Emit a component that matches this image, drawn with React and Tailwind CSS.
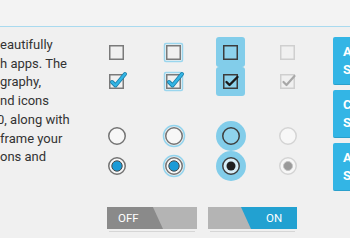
import React from 'react';

const BLUE = '#33b5e5';
const HALO = '#82cdea';

function Checkbox({ variant = 'normal', checked = false }) {
  const disabled = variant === 'disabled';
  const pressed = variant === 'pressed';
  const boxStroke = disabled ? '#cfcfcf' : pressed ? '#3c3c3c' : '#7a7a7a';
  return (
    <svg width="24" height="24" viewBox="0 0 24 24">
      {variant === 'focused' && (
        <rect x="2.5" y="3.5" width="18" height="18" rx="1.5" fill="none" stroke="#9ad6ee" strokeWidth="1.5" />
      )}
      <rect
        x="4.75"
        y="5.75"
        width="13.5"
        height="13.5"
        fill={pressed ? '#8dd2ec' : 'none'}
        stroke={boxStroke}
        strokeWidth="1.5"
      />
      {checked && !pressed && !disabled && (
        <>
          <path d="M7 13 L10.5 16.5 L20 5" fill="none" stroke="#1b7fa8" strokeWidth="4" strokeLinecap="round" strokeLinejoin="round" />
          <path d="M7 13 L10.5 16.5 L20 5" fill="none" stroke={BLUE} strokeWidth="2.4" strokeLinecap="round" strokeLinejoin="round" />
        </>
      )}
      {checked && pressed && (
        <path d="M7.5 13 L10.5 16 L18.5 8" fill="none" stroke="#1a1a1a" strokeWidth="2.4" strokeLinecap="round" strokeLinejoin="round" />
      )}
      {checked && disabled && (
        <path d="M7.5 13 L10.5 16 L18.5 7" fill="none" stroke="#a8a8a8" strokeWidth="2.2" strokeLinecap="round" strokeLinejoin="round" />
      )}
    </svg>
  );
}

function Radio({ variant = 'normal', checked = false }) {
  const disabled = variant === 'disabled';
  const pressed = variant === 'pressed';
  return (
    <svg width="30" height="30" viewBox="0 0 30 30">
      {pressed && <circle cx="15" cy="15" r="15" fill={HALO} />}
      {variant === 'focused' && <circle cx="15" cy="15" r="10.5" fill="none" stroke="#92d4ee" strokeWidth="1.5" />}
      <circle
        cx="15"
        cy="15"
        r="8.25"
        fill={pressed ? (checked ? '#d6eef8' : '#8fd3ed') : '#f7f7f7'}
        stroke={disabled ? '#d4d4d4' : pressed ? '#3f3f3f' : '#747474'}
        strokeWidth="1.5"
      />
      {checked && !pressed && !disabled && (
        <circle cx="15" cy="15" r="5.2" fill="#1b9bd7" stroke="#4a4a4a" strokeWidth="1" />
      )}
      {checked && pressed && <circle cx="15" cy="15" r="4.5" fill="#1f1f1f" />}
      {checked && disabled && <circle cx="15" cy="15" r="4.5" fill="#9a9a9a" stroke="#c4c4c4" strokeWidth="1" />}
    </svg>
  );
}

const variants = ['normal', 'focused', 'pressed', 'disabled'];

export default function App() {
  const lines = [
    ['eautifully', ''],
    ['h apps. The', ''],
    ['graphy,', ''],
    ['nd icons', ''],
    ['0, along with', '-ml-[3px]'],
    ['frame your', ''],
    ['ons and', ''],
  ];

  return (
    <div className="w-[350px] h-[238px] overflow-hidden bg-[#f0f0f0] flex flex-col" style={{ fontFamily: 'Roboto, "Liberation Sans", sans-serif' }}>
      <div className="h-[27px] shrink-0 bg-[#f3f3f3] border-b border-[#a9daef]" />
      <div className="flex">
        <div className="w-[88px] shrink-0 pt-[9px] text-[13px] leading-[18.7px] text-[#333] whitespace-nowrap overflow-hidden">
          {lines.map(([t, cls]) => (
            <div key={t} className={cls}>{t}</div>
          ))}
        </div>

        <div className="w-[228px] shrink-0 pt-[10px]">
          <div className="grid grid-cols-4">
            {[false, true].map((checked) =>
              variants.map((v) => (
                <div key={v + checked} className="h-[29.5px] flex items-center justify-center">
                  {v === 'pressed' ? (
                    <div className="w-[29px] h-[29.5px] rounded-[3px] bg-[#82cdea] flex items-center justify-center">
                      <Checkbox variant={v} checked={checked} />
                    </div>
                  ) : (
                    <Checkbox variant={v} checked={checked} />
                  )}
                </div>
              ))
            )}
          </div>

          <div className="grid grid-cols-4 mt-[25px]">
            {[false, true].map((checked) =>
              variants.map((v) => (
                <div key={v + checked} className="h-[30px] flex items-center justify-center">
                  <Radio variant={v} checked={checked} />
                </div>
              ))
            )}
          </div>

          <div className="flex gap-[11px] pl-[19px] mt-[26px]">
            <div>
              <div className="relative w-[90px] h-[22px] bg-[#b4b4b4]">
                <div className="absolute inset-y-0 left-0 w-[56px] bg-[#8a8a8a] [clip-path:polygon(0_0,82%_0,100%_100%,0_100%)]" />
                <span className="absolute left-[11px] top-0 leading-[22px] text-[11.5px] text-white">OFF</span>
              </div>
              <div className="h-px mt-[2px] mx-[2px] bg-[#d6d6d6]" />
            </div>
            <div>
              <div className="relative w-[89px] h-[22px] bg-[#b4b4b4]">
                <div className="absolute inset-y-0 right-0 w-[56px] bg-[#22a1d1] [clip-path:polygon(0_0,100%_0,100%_100%,10px_100%)]" />
                <span className="absolute left-[58px] top-0 leading-[22px] text-[11.5px] text-white">ON</span>
              </div>
              <div className="h-px mt-[2px] mx-[2px] bg-[#d6d6d6]" />
            </div>
          </div>
        </div>

        <div className="ml-[17px] pt-[10px] flex flex-col gap-[5px] shrink-0">
          {[['Accent', 'Small'], ['Cancel', 'Small'], ['Accept', 'Small']].map(([a, b]) => (
            <div key={a} className="w-[70px] h-[48px] rounded-[2px] bg-[#33b5e5] border-b border-[#2aa0cc] pl-[10px] flex flex-col justify-center text-white font-bold text-[13px] leading-[18px]">
              <span>{a}</span>
              <span>{b}</span>
            </div>
          ))}
        </div>
      </div>
    </div>
  );
}
